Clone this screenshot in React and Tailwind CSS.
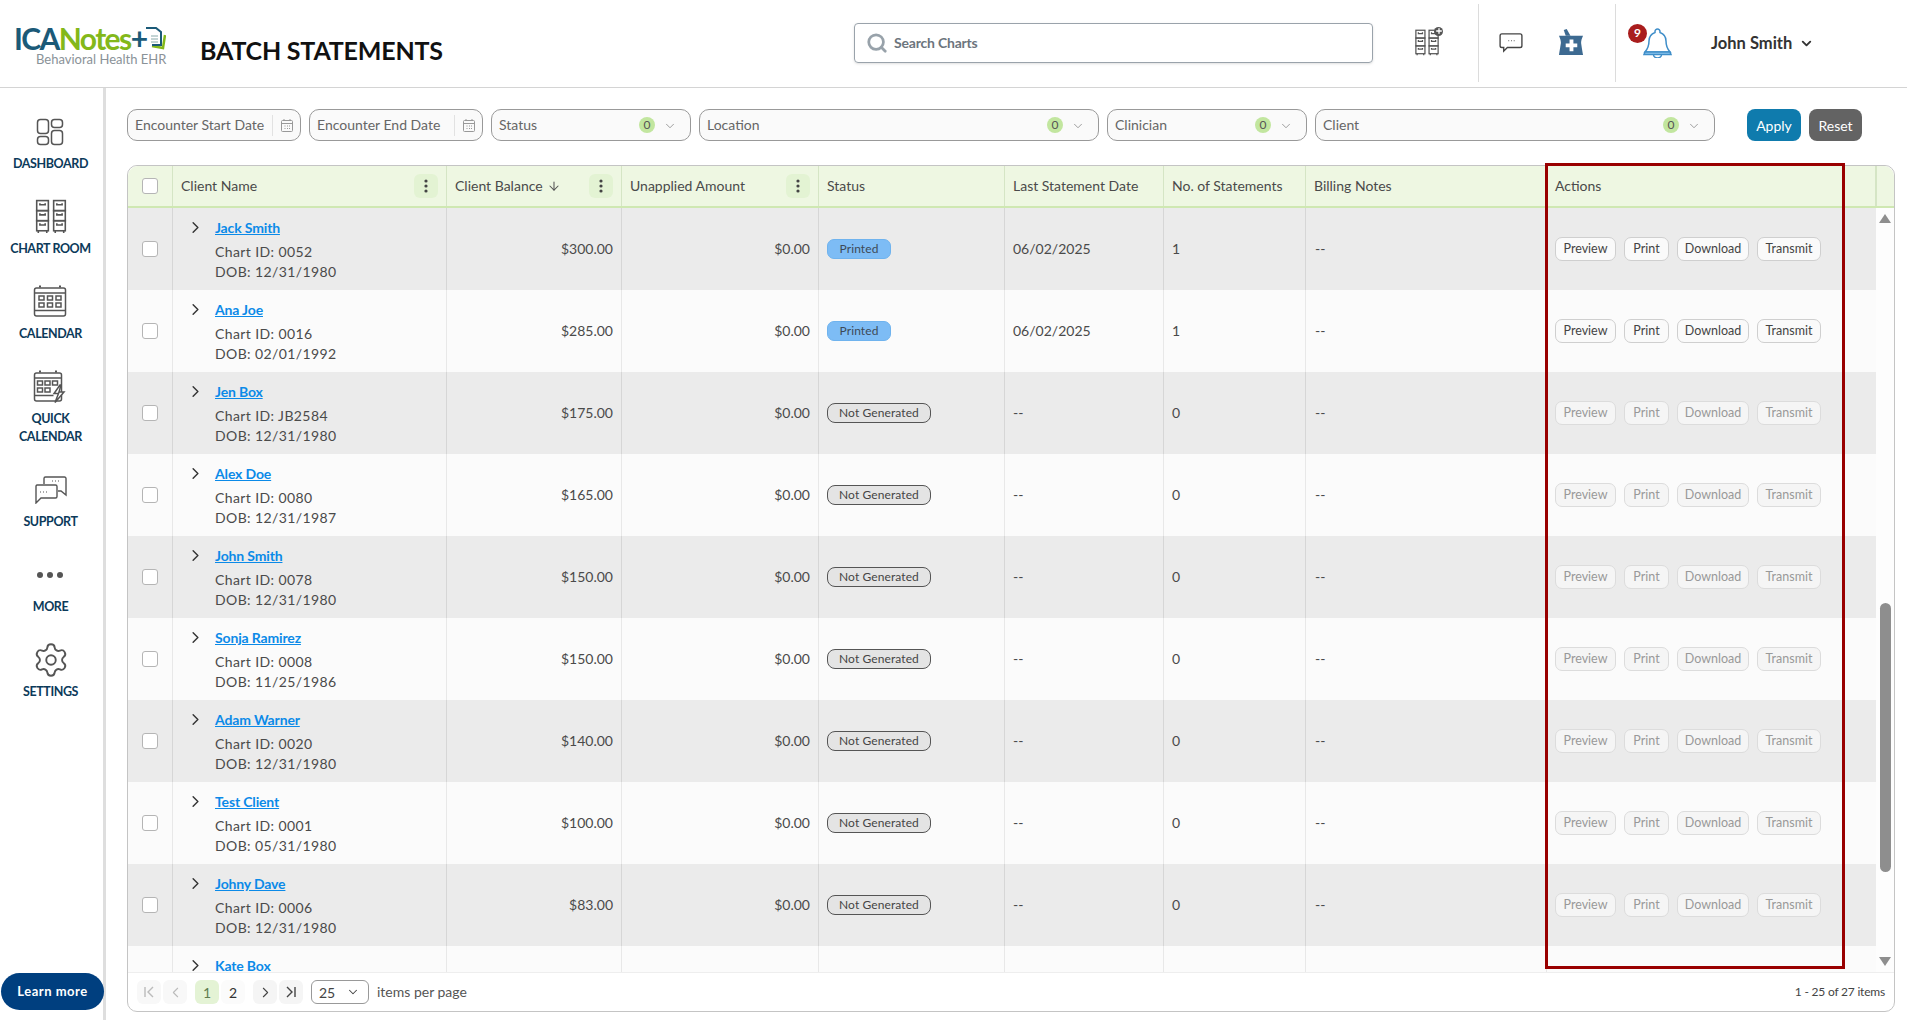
import React from "react";
import { Search, ChevronDown, ChevronRight, ChevronLeft, ArrowDown, Settings, Plus } from "lucide-react";

const COLS = "grid grid-cols-[45px_274px_175px_197px_186px_159px_142px_241px_329px]";

const rows = [
  ["Jack Smith", "0052", "12/31/1980", "$300.00", "Printed", "06/02/2025", "1"],
  ["Ana Joe", "0016", "02/01/1992", "$285.00", "Printed", "06/02/2025", "1"],
  ["Jen Box", "JB2584", "12/31/1980", "$175.00", "Not Generated", "--", "0"],
  ["Alex Doe", "0080", "12/31/1987", "$165.00", "Not Generated", "--", "0"],
  ["John Smith", "0078", "12/31/1980", "$150.00", "Not Generated", "--", "0"],
  ["Sonja Ramirez", "0008", "11/25/1986", "$150.00", "Not Generated", "--", "0"],
  ["Adam Warner", "0020", "12/31/1980", "$140.00", "Not Generated", "--", "0"],
  ["Test Client", "0001", "05/31/1980", "$100.00", "Not Generated", "--", "0"],
  ["Johny Dave", "0006", "12/31/1980", "$83.00", "Not Generated", "--", "0"],
  ["Kate Box", "0044", "12/31/1980", "$75.00", "Not Generated", "--", "0"],
];

const ACTIONS = [
  ["Preview", "w-[61px]"],
  ["Print", "w-[45px]"],
  ["Download", "w-[72px]"],
  ["Transmit", "w-[64px]"],
];

function Drawer({ x, y }) {
  return (
    <g>
      <rect x={x} y={y} width="11" height="9.5" />
      <path d={`M${x + 3} ${y + 2.5}v1.5h5v-1.5`} />
    </g>
  );
}

function Cabinet({ size = 36, color = "#555" }) {
  return (
    <svg width={size} height={size} viewBox="0 0 30 34" fill="none" stroke={color} strokeWidth="1.5">
      {[1, 17].map((x) => (
        <g key={x}>
          <Drawer x={x + 0.5} y={1.5} />
          <Drawer x={x + 0.5} y={11} />
          <Drawer x={x + 0.5} y={20.5} />
          <path d={`M${x + 2} 30v2M${x + 10} 30v2`} />
        </g>
      ))}
    </svg>
  );
}

function DashboardIcon() {
  return (
    <svg width="28" height="28" viewBox="0 0 28 28" fill="none" stroke="#555" strokeWidth="1.5">
      <rect x="1.5" y="1.5" width="11" height="14" rx="3" />
      <rect x="15.5" y="1.5" width="11" height="8" rx="3" />
      <rect x="1.5" y="18.5" width="11" height="8" rx="3" />
      <rect x="15.5" y="12.5" width="11" height="14" rx="3" />
    </svg>
  );
}

function CalendarIcon({ bolt }) {
  return (
    <svg width="34" height="34" viewBox="0 0 34 34" fill="none" stroke="#555" strokeWidth="1.5">
      <rect x="1.5" y="3" width={bolt ? 27 : 31} height="28" rx="2" />
      <path d={bolt ? "M1.5 8h27M1.5 25.5h19" : "M1.5 8h31M1.5 25.5h31"} />
      <path d={bolt ? "M6 1.5h2M22 1.5h2" : "M6 1.5h2M26 1.5h2"} strokeWidth="2" />
      {(bolt ? [4.5, 12, 19.5] : [6, 14.5, 23]).map((x) => (
        <rect key={x} x={x} y="11" width="5" height="4" />
      ))}
      {(bolt ? [4.5, 12] : [6, 14.5, 23]).map((x) => (
        <rect key={x} x={x} y="18" width="5" height="4" />
      ))}
      {bolt && <path d="M27 15l-6 8.5h4.5l-3.5 9 9-10.5h-5l2-7z" fill="#fff" />}
    </svg>
  );
}

function SupportIcon() {
  return (
    <svg width="32" height="28" viewBox="0 0 32 28" fill="none" stroke="#555" strokeWidth="1.4">
      <path d="M9 8V2.500A1.500 1.500 0 0 1 10.500 1h19A1.500 1.500 0 0 1 31 2.500V19l-5-4h-3" />
      <path d="M2 9h18.500A1.500 1.500 0 0 1 22 10.500v10a1.500 1.500 0 0 1-1.500 1.500H6l-5 5V10.500A1.500 1.500 0 0 1 2 9z" fill="#fff" />
      <path d="M5 16h1M8 16h1M11 16h1M17 5h1M20 5h1M23 5h1" strokeWidth="1.2" />
    </svg>
  );
}

function NavItem({ icon, children, first }) {
  return (
    <div className={`flex flex-col items-center ${first ? "" : "mt-[26px]"}`}>
      <div className="h-[36px] flex items-center justify-center">{icon}</div>
      <div className="mt-[5px] text-[12.5px] leading-[18px] font-bold text-[#0c3a5a] text-center tracking-[-0.4px]">{children}</div>
    </div>
  );
}

function Sidebar() {
  return (
    <aside className="w-[106px] shrink-0 border-r-[3px] border-[#dedede] flex flex-col items-center pt-[26px] pr-[2px] pb-[10px]">
      <NavItem first icon={<DashboardIcon />}>DASHBOARD</NavItem>
      <NavItem icon={<Cabinet />}>CHART ROOM</NavItem>
      <NavItem icon={<CalendarIcon />}>CALENDAR</NavItem>
      <NavItem icon={<CalendarIcon bolt />}>
        QUICK
        <br />
        CALENDAR
      </NavItem>
      <NavItem icon={<SupportIcon />}>SUPPORT</NavItem>
      <NavItem
        icon={
          <svg width="26" height="6" viewBox="0 0 26 6" fill="#555">
            <circle cx="3" cy="3" r="3" />
            <circle cx="13" cy="3" r="3" />
            <circle cx="23" cy="3" r="3" />
          </svg>
        }
      >
        MORE
      </NavItem>
      <NavItem icon={<Settings size={38} strokeWidth={1.2} color="#555" />}>SETTINGS</NavItem>
      <button className="mt-auto w-[103px] h-[37px] shrink-0 rounded-full bg-[#003f7f] text-white text-[13px] font-bold tracking-[0.5px] self-start ml-[1px]">
        Learn more
      </button>
    </aside>
  );
}

function Header() {
  return (
    <header className="h-[88px] shrink-0 border-b border-[#d4d4d4] flex items-center pb-[2px]">
      <div className="w-[200px] pl-[14px] shrink-0 mt-[2px]">
        <div className="flex items-center h-[32px]">
          <span className="text-[30px] font-bold tracking-[-1.6px] text-[#1b5a78] leading-none">ICA</span>
          <span className="text-[30px] font-bold tracking-[-1.6px] text-[#83b81a] leading-none">Notes</span>
          <span className="text-[30px] font-bold text-[#1b5a78] leading-none tracking-[-1px]">+</span>
          <svg width="22" height="26" viewBox="0 0 22 26" fill="none" className="-ml-[3px]">
            <path d="M8 21l11 2 2-13" stroke="#83b81a" strokeWidth="2.5" />
            <path d="M2 3h10l5 4v13H8" stroke="#1b5a78" strokeWidth="2" fill="#fff" />
            <path d="M7 11h7M7 14h7M7 17h7" stroke="#8aa" strokeWidth="1" />
          </svg>
        </div>
        <div className="-mt-[2px] ml-[22px] text-[13px] leading-[14px] text-[#8a9298] whitespace-nowrap">Behavioral Health EHR</div>
      </div>
      <h1 className="w-[654px] shrink-0 mt-[16px] text-[25px] font-bold text-[#111] tracking-[-0.2px]">BATCH STATEMENTS</h1>
      <div className="w-[519px] h-[40px] shrink-0 border border-[#9aa3ab] rounded-[4px] flex items-center pl-[11px] shadow-sm">
        <Search size={22} strokeWidth={3} color="#98a2aa" />
        <span className="ml-[6px] text-[14px] font-bold tracking-[-0.2px] text-[#6c757d]">Search Charts</span>
      </div>
      <div className="ml-[40px] w-[28px] flex items-center relative">
        <Cabinet size={28} />
        <span className="absolute -top-[2px] -right-[2px] w-[9px] h-[9px] rounded-full bg-[#555] flex items-center justify-center">
          <Plus size={8} strokeWidth={4} color="#fff" />
        </span>
      </div>
      <div className="ml-[37px] w-px h-[78px] bg-[#dcdcdc]" />
      <svg className="ml-[20px]" width="24" height="20" viewBox="0 0 26 22" fill="none" stroke="#444" strokeWidth="1.5">
        <path d="M3 1h20a2 2 0 0 1 2 2v11a2 2 0 0 1-2 2H9l-4 4v-4H3a2 2 0 0 1-2-2V3a2 2 0 0 1 2-2z" />
        <path d="M10 8.500h1M13 8.500h1M16 8.500h1" strokeWidth="1" />
      </svg>
      <svg className="ml-[35px]" width="26" height="27" viewBox="0 0 27 28" fill="#3d6a91">
        <path d="M6 1l3-1 4 7H8z" />
        <path d="M1 7h25c-1.500 3-2 6-2 7s.5 4 2 13H1c1.500-9 2-12 2-13s-.5-4-2-7z" />
        <path d="M12 11h4v4h4v4h-4v4h-4v-4H8v-4h4z" fill="#fff" />
      </svg>
      <div className="ml-[31px] w-px h-[78px] bg-[#dcdcdc]" />
      <div className="relative ml-[27px] w-[29px] h-[30px]">
        <svg width="29" height="30" viewBox="0 0 29 30" fill="none" stroke="#3f8ec9" strokeWidth="1.5">
          <path d="M14.500 1a2.500 2.500 0 0 0-2.500 2.500v1C8 6 6 9.500 6 13c0 5-1 7.500-4 11h25c-3-3.500-4-6-4-11 0-3.500-2-7-6-8.500v-1A2.500 2.500 0 0 0 14.500 1z" />
          <path d="M2 24h25l1 2.500H1z" fill="#8fc7ef" />
          <path d="M10.500 26.500a4 3.500 0 0 0 8 0" />
        </svg>
        <span className="absolute -top-[4px] -left-[15px] w-[19px] h-[19px] rounded-full bg-[#a91d1d] text-white text-[12px] font-bold flex items-center justify-center">9</span>
      </div>
      <span className="ml-[39px] mt-[1px] text-[16.5px] font-bold text-[#333]">John Smith</span>
      <ChevronDown className="ml-[7px] mt-[1px]" size={15} strokeWidth={3} color="#333" />
    </header>
  );
}

function DateFilter({ label }) {
  return (
    <div className="w-[174px] h-[32px] border border-[#999] rounded-[10px] bg-[#fafafa] flex items-center pl-[7px] text-[14px] text-[#666]">
      <span className="w-[137px] whitespace-nowrap pb-[2px]">{label}</span>
      <span className="w-px h-[21px] bg-[#e2e2e2]" />
      <svg className="ml-[8px]" width="12" height="13" viewBox="0 0 12 13" fill="none" stroke="#999" strokeWidth="1">
        <rect x="0.500" y="1.500" width="11" height="11" rx="1" />
        <path d="M0.500 4.500h11M3 0v2M9 0v2M3.500 7h1M6 7h1M8 7h1M3.500 9.500h1M6 9.500h1M8 9.500h1" />
      </svg>
    </div>
  );
}

function SelectFilter({ label, width }) {
  return (
    <div className={`${width} h-[32px] border border-[#999] rounded-[10px] bg-[#fafafa] flex items-center pl-[7px] pr-[13px] text-[14px] text-[#666]`}>
      <span className="flex-1 pb-[2px]">{label}</span>
      <span className="w-[16px] h-[16px] rounded-full bg-[#c2e69f] text-[#555] text-[12px] flex items-center justify-center">0</span>
      <ChevronDown className="ml-[8px] mt-[2px]" size={14} strokeWidth={1.2} color="#777" />
    </div>
  );
}

function Filters() {
  return (
    <div className="flex items-center gap-[8px] h-[32px]">
      <DateFilter label="Encounter Start Date" />
      <DateFilter label="Encounter End Date" />
      <SelectFilter label="Status" width="w-[200px]" />
      <SelectFilter label="Location" width="w-[400px]" />
      <SelectFilter label="Clinician" width="w-[200px]" />
      <SelectFilter label="Client" width="w-[400px]" />
      <button className="ml-[24px] w-[54px] h-[32px] rounded-[8px] bg-[#0f7bad] text-white text-[14px]">Apply</button>
      <button className="w-[53px] h-[32px] rounded-[8px] bg-[#636363] text-white text-[14px]">Reset</button>
    </div>
  );
}

function Kebab() {
  return (
    <span className="ml-auto w-[24px] h-[24px] rounded-[6px] bg-[#e3f3d3] flex items-center justify-center">
      <svg width="4" height="14" viewBox="0 0 4 14" fill="#444">
        <circle cx="2" cy="2" r="1.600" />
        <circle cx="2" cy="7" r="1.600" />
        <circle cx="2" cy="12" r="1.600" />
      </svg>
    </span>
  );
}

function HeadCell({ children, kebab, last }) {
  return (
    <div className={`flex items-center pl-[8px] pr-[8px] pb-[1px] ${last ? "" : "border-r border-[#d5e5c5]"}`}>
      {children}
      {kebab && <Kebab />}
    </div>
  );
}

function Checkbox() {
  return <span className="w-[16px] h-[16px] rounded-[3px] border border-[#b5b5b5] bg-white" />;
}

function ActionButton({ label, width, enabled }) {
  return (
    <span
      className={
        enabled
          ? `${width} h-[24px] rounded-[7px] border border-[#cfcfcf] bg-[#fafafa] text-[12.5px] text-[#444] flex items-center justify-center`
          : `${width} h-[24px] rounded-[7px] border border-[#dcdcdc] bg-[#f5f5f5] text-[12.5px] text-[#999] flex items-center justify-center`
      }
    >
      {label}
    </span>
  );
}

function Pill({ status }) {
  return status === "Printed" ? (
    <span className="h-[20px] w-[64px] rounded-[7px] bg-[#7dbcf5] border border-[#6fb3ee] text-[#3d4a57] text-[12px] tracking-[0.1px] flex items-center justify-center">Printed</span>
  ) : (
    <span className="h-[20px] w-[104px] rounded-[8px] bg-[#e4e4e4] border border-[#555] text-[#444] text-[12px] tracking-[0.1px] flex items-center justify-center">Not Generated</span>
  );
}

function Row({ row, index }) {
  const [name, id, dob, bal, status, date, count] = row;
  const gray = index % 2 === 0;
  const bg = gray ? "bg-[#ebebeb]" : "bg-[#fbfbfb]";
  const line = gray ? "border-r border-[#d6d6d6]" : "border-r border-[#e8e8e8]";
  const enabled = status === "Printed";
  return (
    <div className={`${COLS} h-[82px] shrink-0 text-[14px] text-[#4a4a4a] ${bg}`}>
      <div className={`${line} flex items-center justify-center`}>
        <Checkbox />
      </div>
      <div className={`${line} pl-[18px] pt-[9px]`}>
        <div className="flex items-center h-[20px]">
          <ChevronRight className="-ml-[5px] mr-[10px]" size={19} strokeWidth={1.800} color="#333" />
          <a className="font-bold text-[#0b8ae8] underline tracking-[-0.15px]">{name}</a>
        </div>
        <div className="ml-[24px] mt-[5px] leading-[20px] tracking-[0.4px]">Chart ID: {id}</div>
        <div className="ml-[24px] leading-[20px] tracking-[0.4px]">DOB: {dob}</div>
      </div>
      <div className={`${line} flex items-center justify-end pr-[8px] pb-[2px]`}>{bal}</div>
      <div className={`${line} flex items-center justify-end pr-[8px] pb-[2px]`}>$0.00</div>
      <div className={`${line} flex items-center pl-[8px]`}>
        <Pill status={status} />
      </div>
      <div className={`${line} flex items-center pl-[8px] pb-[2px]`}>{date}</div>
      <div className={`${line} flex items-center pl-[8px] pb-[2px]`}>{count}</div>
      <div className={`${line} flex items-center pl-[9px] pb-[2px]`}>--</div>
      <div className="flex items-center gap-[8px] pl-[8px]">
        {ACTIONS.map(([l, w]) => (
          <ActionButton key={l} label={l} width={w} enabled={enabled} />
        ))}
      </div>
    </div>
  );
}

function Table() {
  return (
    <div className="relative mt-[24px] h-[847px] w-[1768px] border border-[#c4c4c4] rounded-[10px] flex flex-col">
      <div className="flex h-[42px] shrink-0 bg-[#eef7e2] border-b-2 border-[#cfe8b2] rounded-t-[10px]">
        <div className={`${COLS} w-[1748px] text-[14px] text-[#4a4a4a]`}>
          <div className="flex items-center justify-center border-r border-[#d5e5c5]">
            <Checkbox />
          </div>
          <HeadCell kebab>Client Name</HeadCell>
          <HeadCell kebab>
            Client Balance
            <ArrowDown className="ml-[4px]" size={14} strokeWidth={1.800} color="#555" />
          </HeadCell>
          <HeadCell kebab>Unapplied Amount</HeadCell>
          <HeadCell>Status</HeadCell>
          <HeadCell>Last Statement Date</HeadCell>
          <HeadCell>No. of Statements</HeadCell>
          <HeadCell>Billing Notes</HeadCell>
          <HeadCell>Actions</HeadCell>
        </div>
        <div className="flex-1 border-l border-[#d5e5c5]" />
      </div>
      <div className="flex h-[764px] overflow-hidden">
        <div className="w-[1748px] flex flex-col">
          {rows.map((r, i) => (
            <Row key={r[0]} row={r} index={i} />
          ))}
        </div>
        <div className="flex-1 flex flex-col items-center bg-[#fdfdfd] pt-[6px] pb-[6px]">
          <span className="w-0 h-0 border-x-[6px] border-x-transparent border-b-[9px] border-b-[#8e8e8e]" />
          <span className="mt-[380px] w-[11px] h-[269px] rounded-[6px] bg-[#8e8e8e]" />
          <span className="mt-auto w-0 h-0 border-x-[6px] border-x-transparent border-t-[9px] border-t-[#8e8e8e]" />
        </div>
      </div>
      <div className="flex-1 border-t border-[#eeeeee] flex items-center pl-[9px] pr-[9px] text-[14px] text-[#555] rounded-b-[10px]">
        <span className="w-[24px] h-[24px] rounded-[6px] bg-[#f8f8f8] flex items-center justify-center">
          <svg width="14" height="14" viewBox="0 0 14 14" fill="none" stroke="#bbb" strokeWidth="1.400"><path d="M3 2v10M11 2L6 7l5 5" /></svg>
        </span>
        <span className="ml-[2px] w-[24px] h-[24px] rounded-[6px] bg-[#f8f8f8] flex items-center justify-center">
          <ChevronLeft size={17} strokeWidth={1.500} color="#bbb" />
        </span>
        <span className="ml-[8px] w-[24px] h-[24px] rounded-[6px] bg-[#e4f3d5] text-[#5f7d50] flex items-center justify-center">1</span>
        <span className="ml-[2px] w-[24px] h-[24px] rounded-[6px] bg-[#fbfbfb] text-[#333] flex items-center justify-center">2</span>
        <span className="ml-[8px] w-[24px] h-[24px] rounded-[6px] bg-[#f5f5f5] flex items-center justify-center">
          <ChevronRight size={17} strokeWidth={1.500} color="#444" />
        </span>
        <span className="ml-[2px] w-[24px] h-[24px] rounded-[6px] bg-[#f5f5f5] flex items-center justify-center">
          <svg width="14" height="14" viewBox="0 0 14 14" fill="none" stroke="#444" strokeWidth="1.400"><path d="M11 2v10M3 2l5 5-5 5" /></svg>
        </span>
        <span className="ml-[8px] w-[58px] h-[24px] rounded-[6px] border border-[#999] flex items-center pl-[7px] pr-[8px] text-[#444]">
          <span className="flex-1">25</span>
          <ChevronDown size={14} strokeWidth={1.800} color="#444" />
        </span>
        <span className="ml-[8px] pb-[1px]">items per page</span>
        <span className="ml-auto text-[12px] text-[#444] tracking-[-0.2px]">1 - 25 of 27 items</span>
      </div>
      <div className="absolute left-[1417px] -top-[3px] w-[300px] h-[806px] border-[3px] border-[#990000] pointer-events-none" />
    </div>
  );
}

export default function App() {
  return (
    <div className="w-full h-screen overflow-hidden bg-white flex flex-col font-['Lato',sans-serif]">
      <Header />
      <div className="flex flex-1 min-h-0">
        <Sidebar />
        <main className="flex-1 pl-[21px] pt-[21px]">
          <Filters />
          <Table />
        </main>
      </div>
    </div>
  );
}
